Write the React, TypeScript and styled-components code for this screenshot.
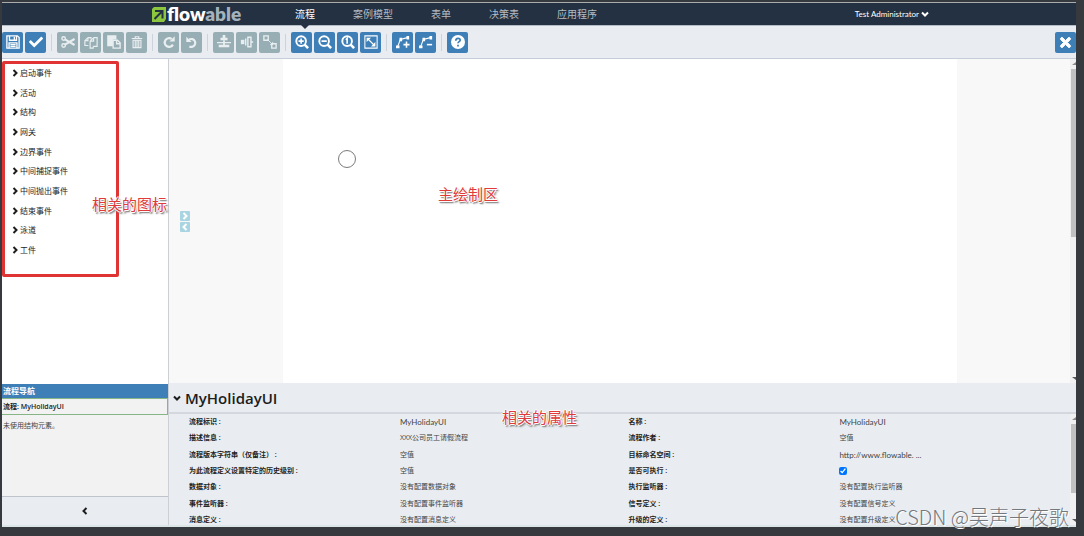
import React from "react";
import styled, { createGlobalStyle } from "styled-components";
import { FaCheck, FaTimes } from "react-icons/fa";

const GlobalStyle = createGlobalStyle`
  * { box-sizing: border-box; }
  body {
    margin: 0;
    background: #363a3f;
    color: #1d1d1d;
    font-family: "Open Sans", "Noto Sans CJK SC", sans-serif;
    font-size: 8px;
  }
  :where(button) { font: inherit; color: inherit; border: 0; padding: 0; background: none; cursor: pointer; }
`;

const Frame = styled.div`
  display: flex;
  flex-direction: column;
  height: 100vh;
  padding: 2px 8px 9px 2px;
`;

const Header = styled.header`
  display: flex;
  align-items: center;
  flex: none;
  height: 24px;
  padding-left: 150px;
  border-top: 1px solid #a9abad;
  border-bottom: 1px solid #b4bcc6;
  background: #233142;
`;

const Logo = styled.a`
  display: flex;
  align-items: center;
  gap: 1px;
  width: 124px;
  color: #fff;
  font: 800 19px/20px Lato, sans-serif;
  text-decoration: none;

  span { color: #a3b2bd; }
`;

const Tabs = styled.nav`
  display: flex;
  flex: 1;
  height: 100%;
`;

const Tab = styled.a<{ $active?: boolean }>`
  position: relative;
  padding: 0 19px;
  color: ${(p) => (p.$active ? "#fff" : "#b3bcc5")};
  font-size: 10px;
  line-height: 22px;
  text-decoration: none;

  &::after {
    content: "";
    display: ${(p) => (p.$active ? "block" : "none")};
    position: absolute;
    top: 100%;
    left: 50%;
    margin-left: -4px;
    border: 4px solid transparent;
    border-top-color: #233142;
  }
`;

const UserButton = styled.button`
  display: flex;
  align-items: center;
  gap: 2px;
  margin-right: 147px;
  color: #fff;
  font: 400 8px/20px Lato, sans-serif;
`;

const Toolbar = styled.div`
  display: flex;
  align-items: center;
  gap: 2px;
  flex: none;
  height: 33px;
  border-bottom: 1px solid #c5cdd8;
  background: #e9edf1;
`;

const ToolButton = styled.button<{ $off?: boolean }>`
  display: flex;
  align-items: center;
  justify-content: center;
  width: 21px;
  height: 21px;
  border-radius: 2px;
  background: ${(p) => (p.$off ? "#98aeb5" : "#3f7fb7")};
  color: ${(p) => (p.$off ? "#e9eff1" : "#fff")};
`;

const Separator = styled.span`
  width: 1px;
  height: 17px;
  margin: 0 3px;
  background: #cdd3da;
`;

const Spacer = styled.span`
  flex: 1;
`;

const Workspace = styled.div`
  display: flex;
  flex: 1;
  min-height: 0;
  border-bottom: 2px solid #dde6e6;
`;

const Sidebar = styled.aside`
  display: flex;
  flex-direction: column;
  flex: none;
  width: 167px;
  border-right: 1px solid #cccfd4;
  background: #fff;
`;

const Palette = styled.div`
  position: relative;
  flex: 1;
  min-height: 0;
  padding-top: 4px;
`;

const PaletteList = styled.ul`
  display: grid;
  grid-auto-rows: 1fr;
  height: 197px;
  margin: 0;
  padding: 0 0 0 9px;
  list-style: none;
`;

const PaletteItem = styled.button`
  display: flex;
  align-items: center;
  gap: 1px;
  height: 100%;
  line-height: 12px;
`;

const HighlightBox = styled.div`
  position: absolute;
  top: 2px;
  left: 0;
  width: 117px;
  height: 216px;
  border: 3px solid #df3433;
  border-radius: 2px;
  pointer-events: none;
`;

const Note = styled.span`
  position: absolute;
  z-index: 2;
  color: #e03a3a;
  font-size: 15px;
  line-height: 20px;
  white-space: nowrap;
  text-shadow: -1px 0 #fff, 1px 0 #fff, 0 -1px #fff, 0 1px #fff, 1px 2px 1px #888, 2px 2px 2px #999;
`;

const PaletteNote = styled(Note)`
  top: 135px;
  left: 90px;
`;

const CanvasNote = styled(Note)`
  top: 125px;
  left: 269px;
`;

const PropertiesNote = styled(Note)`
  top: 24px;
  left: 333px;
`;

const Navigator = styled.section`
  display: flex;
  flex-direction: column;
  flex: none;
  height: 141px;
  background: #f2f2f2;
  color: #444;
  font-size: 7px;
`;

const NavigatorTitle = styled.h2`
  margin: 0;
  padding-left: 1px;
  background: #3f7fb7;
  color: #fff;
  font-size: 8px;
  line-height: 14px;
`;

const CurrentProcess = styled.div`
  padding-left: 1px;
  border: 1px solid #86b586;
  border-left: 0;
  color: #222;
  font-weight: 600;
  line-height: 15px;
`;

const EmptyHint = styled.p`
  flex: 1;
  margin: 0;
  padding: 5px 1px;
  line-height: 12px;
`;

const CollapseButton = styled.button`
  display: flex;
  align-items: center;
  justify-content: center;
  height: 29px;
  border-top: 1px solid #bfc4cc;
  background: #e9edf1;
  color: #1d1d1d;
`;

const Main = styled.main`
  display: flex;
  flex-direction: column;
  flex: 1;
  min-width: 0;
`;

const CanvasRow = styled.div`
  position: relative;
  display: flex;
  flex: 1;
  min-height: 0;
  background: #f8f8f8;
`;

const Gutter = styled.div`
  display: flex;
  flex-direction: column;
  justify-content: center;
  gap: 1px;
  flex: 1;
  padding-left: 11px;
`;

const GutterButton = styled.button`
  display: flex;
  align-items: center;
  justify-content: center;
  width: 10px;
  height: 10px;
  border-radius: 1px;
  background: #a9d5e2;
  color: #fff;
`;

const Canvas = styled.div`
  position: relative;
  flex: 0 0 674px;
  background: #fff;
`;

const StartEvent = styled.svg`
  position: absolute;
  top: 90px;
  left: 54px;
`;

const ScrollTrack = styled.div`
  display: flex;
  flex-direction: column;
  align-items: flex-end;
  flex: none;
  width: 6px;
  background: #f1f1f1;
`;

const ScrollThumb = styled.div<{ $share: number }>`
  flex: ${(p) => p.$share};
  width: 5px;
  background: #c1c1c1;
`;

const ScrollRest = styled.div<{ $share: number }>`
  flex: ${(p) => p.$share};
`;

const ScrollArrow = styled.svg`
  flex: none;
`;

const Properties = styled.section`
  position: relative;
  display: flex;
  flex-direction: column;
  flex: none;
  height: 142px;
  background: #e9edf1;
`;

const PropertiesTitle = styled.h1`
  display: flex;
  align-items: center;
  gap: 4px;
  flex: none;
  height: 31px;
  margin: 0;
  padding: 0 4px;
  border-bottom: 2px solid #d4d8de;
  font-size: 15px;
  font-weight: 600;
  line-height: 20px;
`;

const PropertiesBody = styled.div`
  display: flex;
  flex: 1;
  min-height: 0;
  overflow: hidden;
`;

const TableArea = styled.div`
  flex: 1;
  padding: 0 2px 0 20px;
`;

const Table = styled.table`
  width: 100%;
  height: 114px;
  table-layout: fixed;
  border-collapse: collapse;
  font-size: 7px;
  line-height: 12px;
  text-align: left;

  th, td { padding: 0; }
`;

const Label = styled.th`
  width: 24%;
  color: #222;
  font-weight: 600;
`;

const Value = styled.td<{ $latin?: boolean }>`
  width: 26%;
  color: #444;
  font-family: ${(p) => (p.$latin ? "Lato, sans-serif" : "inherit")};
  font-size: ${(p) => (p.$latin ? "8px" : "7px")};
`;

const Check = styled.input`
  display: block;
  width: 8px;
  height: 8px;
  margin: 0;
`;

const Watermark = styled.span`
  position: absolute;
  right: 7px;
  bottom: -5px;
  z-index: 3;
  color: #74787d;
  font: 300 20px/26px "Noto Sans CJK SC", sans-serif;
  white-space: nowrap;
  text-shadow: 1px 1px #fff;
`;

const drawings: Record<string, React.ReactNode> = {
  save: (
    <>
      <path d="M1 1h12l2 2v12H1z" />
      <path d="M4 1v5h8V1M9.500 2v3M3.500 15V9h9v6M5 11h6M5 13h6" />
    </>
  ),
  cut: (
    <>
      <circle cx="3" cy="4" r="2" strokeWidth="1.600" />
      <circle cx="3" cy="12" r="2" strokeWidth="1.600" />
      <path d="m4.500 5 11 6.500M4.500 11l11-6.500" strokeWidth="2.400" />
    </>
  ),
  copy: (
    <>
      <path d="M4.500 3H8v2M4.500 3 1 6.500V12h4M4.500 3v3.500H1" strokeWidth="1.300" />
      <path d="M11 3h4v10h-4.500M11 3 7 7v8h3.500v-2M11 3v4H7" strokeWidth="1.300" />
    </>
  ),
  paste: (
    <>
      <path d="M1 1h9v3.500H6V12H1z" fill="currentColor" />
      <path d="M7 6h5l3 3v6H7z" />
      <path d="M11 6v4h4" />
    </>
  ),
  trash: (
    <path d="M2 4h12M6 4V2h4v2M3.500 6h9v8.500h-9zM6 6v8M8 6v8M10 6v8" strokeWidth="1.300" />
  ),
  redo: (
    <>
      <path d="M12.500 11A5 5 0 1 1 11 4.500" strokeWidth="2.500" />
      <path d="M14.500 1.500v6h-6z" fill="currentColor" stroke="none" />
    </>
  ),
  undo: (
    <>
      <path d="M5 13.500h3a4.500 4.500 0 1 0-3.500-8" strokeWidth="2.500" />
      <path d="M1.500 2v6h6z" fill="currentColor" stroke="none" />
    </>
  ),
  alignV: (
    <>
      <path d="M6.500 0h3v3H12v3H4V3h2.500zM0 8h16v1.500H0z" fill="currentColor" stroke="none" />
      <path d="M7 6h2v5H7zM2 11h12v3H2z" fill="currentColor" stroke="none" />
    </>
  ),
  alignH: (
    <>
      <path d="M1 5.500h4v5H1z" fill="currentColor" stroke="none" />
      <path d="M6.500 4v8M9 2.500h3.500v11H9zM12.500 8H15" strokeWidth="1.600" />
    </>
  ),
  sameSize: (
    <>
      <path d="M1 1h5v5H1zM10 10h5v5h-5z" />
      <path d="m5 5 6 6M8 11h3V8" strokeWidth="1" />
    </>
  ),
  zoomIn: (
    <>
      <circle cx="7" cy="7" r="5.500" strokeWidth="2.200" />
      <path d="m11 11 4 4" strokeWidth="3" />
      <path d="M4 7h6M7 4v6" strokeWidth="1.800" />
    </>
  ),
  zoomOut: (
    <>
      <circle cx="7" cy="7" r="5.500" strokeWidth="2.200" />
      <path d="m11 11 4 4" strokeWidth="3" />
      <path d="M4 7h6" strokeWidth="2" />
    </>
  ),
  zoomActual: (
    <>
      <circle cx="7" cy="7" r="5.500" strokeWidth="2.200" />
      <path d="m11 11 4 4" strokeWidth="3" />
      <path d="M5.500 5.500 7 4v6" strokeWidth="1.800" />
    </>
  ),
  zoomFit: (
    <>
      <path d="M1 1h14v14H1z" strokeWidth="1.200" />
      <path d="M3 3h5L3 8zM13 13H8l5-5z" fill="currentColor" stroke="none" />
      <path d="m4 4 8 8" strokeWidth="1.300" />
    </>
  ),
  bendAdd: (
    <>
      <path d="M2 13 5 5l8-2" strokeWidth="1.300" />
      <path d="M0 12h4v3H0zM4 3h3v4H4zM12 1h3v4h-3z" fill="currentColor" stroke="none" />
      <path d="M8.500 11h7M12 7.500v7" strokeWidth="1.800" />
    </>
  ),
  bendRemove: (
    <>
      <path d="M2 13 5 5l8-2" strokeWidth="1.300" />
      <path d="M0 12h4v3H0zM4 3h3v4H4zM12 1h3v4h-3z" fill="currentColor" stroke="none" />
      <path d="M9 11h6" strokeWidth="1.800" />
    </>
  ),
  help: (
    <>
      <circle cx="8" cy="8" r="8" fill="#fff" stroke="none" />
      <path d="M5.500 6.500C5.500 3 10.500 3 10.500 6c0 1.500-2.500 1.800-2.500 3.500M8 11v2" stroke="#3f7fb7" strokeWidth="2" />
    </>
  ),
};

function Glyph({ name }: { name: string }) {
  return (
    <svg width="14" height="14" viewBox="0 0 16 16" fill="none" stroke="currentColor" strokeWidth="1.500" aria-hidden="true">
      {drawings[name]}
    </svg>
  );
}

const chevrons = {
  right: "M2.500 1 5.500 4 2.500 7",
  left: "M5.500 1 2.500 4l3 3",
  down: "M1 2.500l3 3 3-3",
};

function Chevron({ to }: { to: keyof typeof chevrons }) {
  return (
    <svg width="8" height="8" viewBox="0 0 8 8" fill="none" stroke="currentColor" strokeWidth="2" aria-hidden="true">
      <path d={chevrons[to]} />
    </svg>
  );
}

type Tool = { label: string; icon: React.ReactNode; off?: boolean };

const toolGroups: Tool[][] = [
  [
    { label: "保存", icon: <Glyph name="save" /> },
    { label: "验证", icon: <FaCheck size={14} /> },
  ],
  [
    { label: "剪切", icon: <Glyph name="cut" />, off: true },
    { label: "复制", icon: <Glyph name="copy" />, off: true },
    { label: "粘贴", icon: <Glyph name="paste" />, off: true },
    { label: "删除", icon: <Glyph name="trash" />, off: true },
  ],
  [
    { label: "重做", icon: <Glyph name="redo" />, off: true },
    { label: "撤销", icon: <Glyph name="undo" />, off: true },
  ],
  [
    { label: "垂直对齐", icon: <Glyph name="alignV" />, off: true },
    { label: "水平对齐", icon: <Glyph name="alignH" />, off: true },
    { label: "相同大小", icon: <Glyph name="sameSize" />, off: true },
  ],
  [
    { label: "放大", icon: <Glyph name="zoomIn" /> },
    { label: "缩小", icon: <Glyph name="zoomOut" /> },
    { label: "实际大小", icon: <Glyph name="zoomActual" /> },
    { label: "适应窗口", icon: <Glyph name="zoomFit" /> },
  ],
  [
    { label: "添加拐点", icon: <Glyph name="bendAdd" /> },
    { label: "删除拐点", icon: <Glyph name="bendRemove" /> },
  ],
  [{ label: "帮助", icon: <Glyph name="help" /> }],
];

const tabs = ["流程", "案例模型", "表单", "决策表", "应用程序"];

const paletteGroups = [
  "启动事件", "活动", "结构", "网关", "边界事件",
  "中间捕捉事件", "中间抛出事件", "结束事件", "泳道", "工件",
];

const properties: [string, string, string, string][] = [
  ["流程标识 :", "MyHolidayUI", "名称 :", "MyHolidayUI"],
  ["描述信息 :", "XXX公司员工请假流程", "流程作者 :", "空值"],
  ["流程版本字符串（仅备注） :", "空值", "目标命名空间 :", "http://www.flowable. ..."],
  ["为此流程定义设置特定的历史级别 :", "空值", "是否可执行 :", "checkbox"],
  ["数据对象 :", "没有配置数据对象", "执行监听器 :", "没有配置执行监听器"],
  ["事件监听器 :", "没有配置事件监听器", "信号定义 :", "没有配置信号定义"],
  ["消息定义 :", "没有配置消息定义", "升级的定义 :", "没有配置升级定义"],
];

const isLatin = (text: string) => /^[\x20-\x7e]+$/.test(text);

function Scrollbar({ thumb, rest }: { thumb: number; rest: number }) {
  return (
    <ScrollTrack>
      <ScrollArrow width="6" height="10" viewBox="0 0 6 10"><path d="M2 6h4V3z" fill="#8a8a8a" /></ScrollArrow>
      <ScrollThumb $share={thumb} />
      <ScrollRest $share={rest} />
      <ScrollArrow width="6" height="10" viewBox="0 0 6 10"><path d="M2 4h4v3z" fill="#555" /></ScrollArrow>
    </ScrollTrack>
  );
}

export default function App() {
  return (
    <Frame>
      <GlobalStyle />
      <Header>
        <Logo href="#">
          <svg width="14" height="15" viewBox="0 0 14 15" aria-hidden="true">
            <path d="M2 0h12v12l-2 3H0V2z" fill="#8cc63f" />
            <path d="M3 4h7.500v7.500M10.500 4 2.500 12" fill="none" stroke="#233142" strokeWidth="2" />
          </svg>
          <div>flow<span>able</span></div>
        </Logo>
        <Tabs>
          {tabs.map((tab, i) => (
            <Tab key={tab} href="#" $active={i === 0}>{tab}</Tab>
          ))}
        </Tabs>
        <UserButton>
          Test Administrator
          <Chevron to="down" />
        </UserButton>
      </Header>
      <Toolbar>
        {toolGroups.map((group, i) => (
          <React.Fragment key={i}>
            {i > 0 && <Separator />}
            {group.map((tool) => (
              <ToolButton key={tool.label} aria-label={tool.label} $off={tool.off}>{tool.icon}</ToolButton>
            ))}
          </React.Fragment>
        ))}
        <Spacer />
        <ToolButton aria-label="关闭"><FaTimes size={15} stroke="currentColor" strokeWidth={30} /></ToolButton>
      </Toolbar>
      <Workspace>
        <Sidebar>
          <Palette>
            <PaletteList>
              {paletteGroups.map((name) => (
                <li key={name}>
                  <PaletteItem><Chevron to="right" />{name}</PaletteItem>
                </li>
              ))}
            </PaletteList>
            <HighlightBox />
            <PaletteNote>相关的图标</PaletteNote>
          </Palette>
          <Navigator>
            <NavigatorTitle>流程导航</NavigatorTitle>
            <CurrentProcess>流程: MyHolidayUI</CurrentProcess>
            <EmptyHint>未使用结构元素。</EmptyHint>
            <CollapseButton aria-label="收起"><Chevron to="left" /></CollapseButton>
          </Navigator>
        </Sidebar>
        <Main>
          <CanvasRow>
            <Gutter>
              <GutterButton aria-label="展开"><Chevron to="right" /></GutterButton>
              <GutterButton aria-label="折叠"><Chevron to="left" /></GutterButton>
            </Gutter>
            <Canvas>
              <StartEvent width="20" height="20" viewBox="0 0 20 20">
                <circle cx="10" cy="10" r="8.500" fill="#fff" stroke="#7b7b7b" />
              </StartEvent>
            </Canvas>
            <Gutter />
            <Scrollbar thumb={168} rest={136} />
            <CanvasNote>主绘制区</CanvasNote>
          </CanvasRow>
          <Properties>
            <PropertiesTitle>
              <Chevron to="down" />
              MyHolidayUI
            </PropertiesTitle>
            <PropertiesBody>
              <TableArea>
                <Table>
                  <tbody>
                    {properties.map(([label, value, label2, value2]) => (
                      <tr key={label}>
                        <Label scope="row">{label}</Label>
                        <Value $latin={isLatin(value)}>{value}</Value>
                        <Label scope="row">{label2}</Label>
                        <Value $latin={isLatin(value2)}>
                          {value2 === "checkbox"
                            ? <Check type="checkbox" aria-label="是否可执行" defaultChecked />
                            : value2}
                        </Value>
                      </tr>
                    ))}
                  </tbody>
                </Table>
              </TableArea>
              <Scrollbar thumb={68} rest={22} />
            </PropertiesBody>
            <PropertiesNote>相关的属性</PropertiesNote>
            <Watermark>CSDN @吴声子夜歌</Watermark>
          </Properties>
        </Main>
      </Workspace>
    </Frame>
  );
}
